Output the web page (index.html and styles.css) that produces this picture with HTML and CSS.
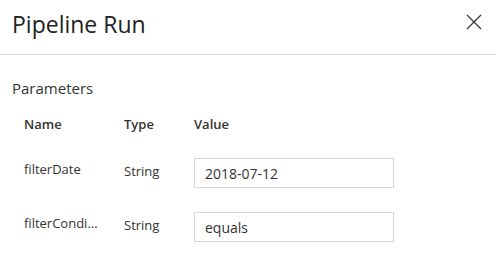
FILE: index.html
```html
<!DOCTYPE html>
<html lang="en">
<head>
  <meta charset="UTF-8" />
  <title>Pipeline Run</title>
  <link rel="stylesheet" href="styles.css">
</head>
<body>
  <div class="panel">
    <div class="panel-header">
      <h2>Pipeline Run</h2>
      <button class="close-btn" aria-label="Close">
        <svg width="16" height="16" viewBox="0 0 16 16">
          <path d="M1 1 L15 15 M15 1 L1 15" stroke="#333" stroke-width="1.2" fill="none" />
        </svg>
      </button>
    </div>

    <div class="panel-body">
      <div class="section-title">Parameters</div>

      <div class="param-table">
        <div class="param-head">Name</div>
        <div class="param-head">Type</div>
        <div class="param-head">Value</div>

        <div class="param-name">filterDate</div>
        <div class="param-type">String</div>
        <input class="param-value" type="text" value="2018-07-12" />

        <div class="param-name">filterCondition</div>
        <div class="param-type">String</div>
        <input class="param-value" type="text" value="equals" />
      </div>
    </div>
  </div>
</body>
</html>
```

FILE: styles.css
```css
body {
  margin: 0;
  background-color: #ffffff;
  color: #333333;
  font-family: 'Open Sans', 'Liberation Sans', sans-serif;
}

.panel {
  width: 496px;
}

.panel-header {
  height: 55px;
  border-bottom: 1px solid #dcdcdc;
  display: flex;
  justify-content: space-between;
  align-items: flex-start;
  padding: 0 14px 0 12px;
  box-sizing: border-box;
}

h2 {
  margin: 0;
  padding-top: 7px;
  font-size: 23px;
  font-weight: 400;
  line-height: 34px;
  color: #222222;
}

.close-btn {
  margin-top: 14px;
  padding: 0;
  border: none;
  background: none;
  cursor: pointer;
  width: 16px;
  height: 16px;
}

.close-btn svg {
  display: block;
}

.panel-body {
  padding: 0 12px;
}

.section-title {
  margin-top: 23px;
  font-size: 15px;
  line-height: 20px;
  color: #333333;
}

.param-table {
  display: grid;
  grid-template-columns: 100px 70px 200px;
  grid-template-rows: 28px 30px 30px;
  row-gap: 24px;
  align-items: center;
  padding-left: 12px;
  margin-top: 8px;
}

.param-head {
  padding-top: 8px;
  font-size: 13px;
  font-weight: 600;
  color: #333333;
}

.param-name,
.param-type {
  font-size: 13px;
  color: #333333;
  white-space: nowrap;
  overflow: hidden;
  text-overflow: ellipsis;
}

.param-name {
  padding-right: 24px;
  padding-bottom: 8px;
}

.param-type {
  padding-bottom: 4px;
}

.param-value {
  box-sizing: border-box;
  width: 200px;
  height: 30px;
  margin: 0;
  padding: 0 10px;
  border: 1px solid #d6d6d6;
  font-family: 'Open Sans', 'Liberation Sans', sans-serif;
  font-size: 14px;
  color: #333333;
  outline: none;
}
```
